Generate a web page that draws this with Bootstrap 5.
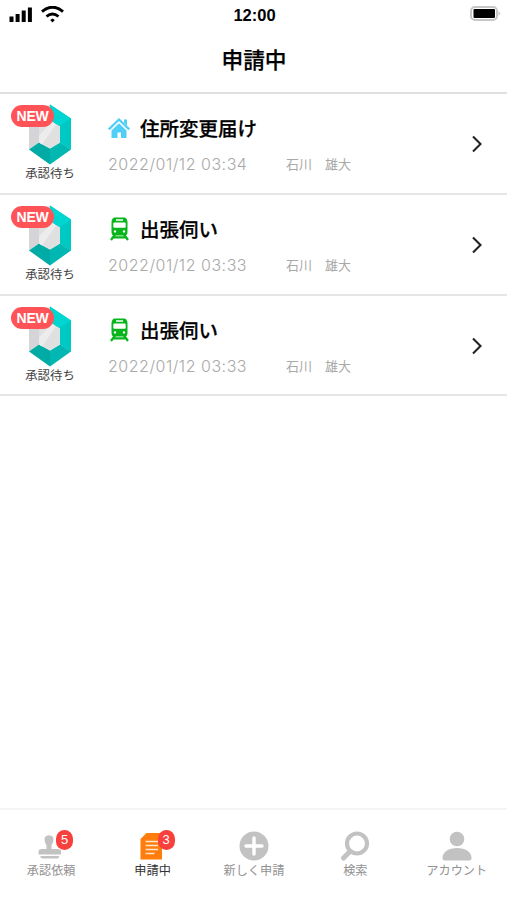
<!DOCTYPE html>
<html lang="ja">
<head>
<meta charset="utf-8">
<meta name="viewport" content="width=device-width, initial-scale=1">
<title>申請中</title>
<link rel="stylesheet" href="https://cdn.jsdelivr.net/npm/bootstrap@5.3.0/dist/css/bootstrap.min.css">
<style>
body{font-family:"Noto Sans CJK JP",sans-serif;background:#fff;color:#000;line-height:1}
svg{display:block;flex:none}
.screen{height:900px;overflow:hidden}
.status{height:30px;padding:0 6px 0 9px}
.battery{margin-top:-4px}
.clock{font:700 16.5px/30px "Liberation Sans",sans-serif;left:0;right:0;padding-left:2px}
.top-bar{height:94.4px;border-bottom:2px solid #e0e0e0}
.top-title{font-size:21.7px;font-weight:500;line-height:30px;margin:14px 0 0;padding-left:1px;-webkit-text-stroke:.25px #000}
.request{height:100.7px;border-bottom:2px solid #e6e6e6;color:#000;text-decoration:none}
.request:hover{color:#000}
.state{width:100px;padding-top:10px}
.state-text{font-size:12.4px;line-height:14px;color:#444;margin-top:1px}
.new-tag{left:11px;top:11px;width:43px;height:22px;font:700 14px/23px "Liberation Sans",sans-serif;background:#ff5358;color:#fff;letter-spacing:-.3px}
.info{padding:22px 0 0 8px}
.kind{height:24px}
.kind-icon{margin-right:10px}
.kind-name{font-size:19.5px;font-weight:500;line-height:24px;-webkit-text-stroke:.25px #000}
.meta{color:#a9a9a9;margin-top:14px;height:20px}
.when{font:300 16px/20px Inter,sans-serif;letter-spacing:.52px;width:178px;white-space:nowrap}
.who{font-size:13px;line-height:20px;white-space:pre}
.arrow{margin:1px 24px 0 0}
.tabs{height:92px;border-top:2px solid #f5f5f5;padding:21px 0 0}
.tab-item{color:#929292;font-size:12.2px;line-height:14px;white-space:nowrap;padding-left:1px}
.tab-item.active{color:#333}
.tab-icon{height:32px;width:34px}
.count{left:22px;top:-1px;width:17px;height:20px;font:400 13px/20px "Liberation Sans",sans-serif;color:#fff;background:#f8403c;border-radius:9px}
</style>
</head>
<body>
<svg width="0" height="0" class="position-absolute" aria-hidden="true">
<symbol id="gem" viewBox="0 0 44 60">
<path fill="#d5d5d7" d="M22 0 1 14v31l10-7V22l11-5z"/>
<path fill="#00d0ca" d="M22 0 43 14v31l-11-7V22l-10-5z"/>
<path fill="#00d6d1" d="M22 0 43 14l-11 7-10-5z"/>
<path fill="#00c9c4" d="m43 14v31l-11-7V21z"/>
<path fill="#00aaa5" d="m1 45 10-7 11 6v16z"/>
<path fill="#00b8b1" d="m43 45-11-7-10 6v16z"/>
<path fill="#e0e0e1" d="m22 16 10 6v16l-10 6-11-6V22z"/>
<path fill="#ececec" d="m28 20-14 20-3-2v-7l13-14z"/>
</symbol>
<symbol id="train" viewBox="0 0 22 24">
<path fill="#08b51c" fill-rule="evenodd" d="M6.500.5h10q3 .8 3 5V15q0 3.500-3 3.500h-10q-3 0-3-3.500V5.500q0-4.200 3-5zM8 2.300v1.400h7V2.300zM6.500 5.500q-1.200 0-1.200 1.200v3.100q0 1 1 1h10.400q1 0 1-1V6.700q0-1.200-1.200-1.200zM7 13.200a1.200 1.200 0 1 0 0 2.400 1.200 1.200 0 0 0 0-2.400zm9 0a1.200 1.200 0 1 0 0 2.400 1.200 1.200 0 0 0 0-2.400z"/>
<path fill="none" stroke="#08b51c" stroke-width="2.200" d="m7 17.500-4 5.500M16 17.500l4 5.500M5.500 20.300h12"/>
</symbol>
</svg>
<main class="screen d-flex flex-column">
<header class="top-bar">
<div class="status d-flex align-items-center justify-content-between position-relative">
<div class="d-flex align-items-center">
<svg width="24" height="17" viewBox="0 0 24 17"><path d="M.5 9.500h4V15h-4zM6.600 7h4v8h-4zM12.700 3.500h4V15h-4zM18.900.5h4V15h-4z"/></svg>
<svg class="ms-2" width="23" height="18" viewBox="0 0 23 18"><path fill="none" stroke="#000" stroke-width="2.900" d="M1 5.700Q11.500-3.300 22 5.700M5.500 10.500Q11.500 5.300 17.500 10.500"/><path d="m11.500 12.400 2.300 1.700-2.300 2.300-2.300-2.300z"/></svg>
</div>
<div class="clock position-absolute text-center">12:00</div>
<svg class="battery" width="31" height="16" viewBox="0 0 31 16"><rect x="1" y="2" width="26" height="13" rx="4" fill="#fff" stroke="#c6c6c6" stroke-width="2"/><rect x="3.500" y="4" width="21.500" height="9" rx="1"/><path fill="#c6c6c6" d="m28.500 6 2 2.500-2 2.500z"/></svg>
</div>
<h1 class="top-title text-center">申請中</h1>
</header>
<section class="flex-grow-1">
<a href="#" class="request d-flex position-relative">
<div class="state d-flex flex-column align-items-center"><svg width="44" height="61"><use href="#gem"/></svg><div class="state-text">承認待ち</div><span class="new-tag position-absolute rounded-pill text-center">NEW</span></div>
<div class="info flex-grow-1">
<div class="kind d-flex align-items-center"><svg class="kind-icon" width="22" height="22" viewBox="0 0 22 22"><path fill="none" stroke="#4fcff5" stroke-width="2.300" d="M.8 12.300 11 2.500l10.200 9.800"/><path fill="#4fcff5" d="M16 2.500h3v6l-3-3zM11 6.200l7.500 7.200V21H13v-5.500H9.500V21h-6v-7.600z"/></svg><span class="kind-name">住所変更届け</span></div>
<div class="meta d-flex"><span class="when">2022/01/12 03:34</span><span class="who">石川　雄大</span></div>
</div>
<svg class="arrow align-self-center" width="12" height="18" viewBox="0 0 12 18"><path fill="none" stroke="#222" stroke-width="2.100" d="m2 1.500 7.500 7.500L2 16.500"/></svg>
</a>
<a href="#" class="request d-flex position-relative">
<div class="state d-flex flex-column align-items-center"><svg width="44" height="61"><use href="#gem"/></svg><div class="state-text">承認待ち</div><span class="new-tag position-absolute rounded-pill text-center">NEW</span></div>
<div class="info flex-grow-1">
<div class="kind d-flex align-items-center"><svg class="kind-icon" width="22" height="24"><use href="#train"/></svg><span class="kind-name">出張伺い</span></div>
<div class="meta d-flex"><span class="when">2022/01/12 03:33</span><span class="who">石川　雄大</span></div>
</div>
<svg class="arrow align-self-center" width="12" height="18" viewBox="0 0 12 18"><path fill="none" stroke="#222" stroke-width="2.100" d="m2 1.500 7.500 7.500L2 16.500"/></svg>
</a>
<a href="#" class="request d-flex position-relative">
<div class="state d-flex flex-column align-items-center"><svg width="44" height="61"><use href="#gem"/></svg><div class="state-text">承認待ち</div><span class="new-tag position-absolute rounded-pill text-center">NEW</span></div>
<div class="info flex-grow-1">
<div class="kind d-flex align-items-center"><svg class="kind-icon" width="22" height="24"><use href="#train"/></svg><span class="kind-name">出張伺い</span></div>
<div class="meta d-flex"><span class="when">2022/01/12 03:33</span><span class="who">石川　雄大</span></div>
</div>
<svg class="arrow align-self-center" width="12" height="18" viewBox="0 0 12 18"><path fill="none" stroke="#222" stroke-width="2.100" d="m2 1.500 7.500 7.500L2 16.500"/></svg>
</a>
</section>
<nav class="tabs row g-0 row-cols-5">
<div class="tab-item col d-flex flex-column align-items-center"><div class="tab-icon position-relative"><svg width="34" height="34" viewBox="0 0 34 34"><path fill="#c2c2c2" d="M12.500 14.500q-3-5.500-1.500-8.500a5 4.500 0 0 1 8 0q1.500 3-1.500 8.500V18H24q3 0 3 3v2.500H4.500V21q0-3 3-3h5zM6.500 25H25v1.500l-1.500 1h-15l-2-1z"/></svg><span class="count position-absolute text-center">5</span></div><div class="tab-label">承認依頼</div></div>
<div class="tab-item active col d-flex flex-column align-items-center"><div class="tab-icon position-relative"><svg width="34" height="34" viewBox="0 0 34 34"><path fill="#ff7d0c" d="M10.500 2H26v26.500H4.500V8z"/><path fill="none" stroke="#ffe5cc" stroke-width="1.600" d="M9.500 10.500H22M9.500 14.500H22M9.500 18.500H22M9.500 22.500h9"/></svg><span class="count position-absolute text-center">3</span></div><div class="tab-label">申請中</div></div>
<div class="tab-item col d-flex flex-column align-items-center"><div class="tab-icon"><svg width="34" height="34" viewBox="0 0 34 34"><circle cx="17" cy="15" r="14.500" fill="#c2c2c2"/><path fill="none" stroke="#fff" stroke-width="3.400" stroke-linecap="round" d="M17 7v16M9 15h16"/></svg></div><div class="tab-label">新しく申請</div></div>
<div class="tab-item col d-flex flex-column align-items-center"><div class="tab-icon"><svg width="34" height="34" viewBox="0 0 34 34"><g fill="none" stroke="#c2c2c2"><circle cx="19" cy="12.500" r="10" stroke-width="4.200"/><path stroke-width="5" stroke-linecap="round" d="m11.500 21-6 6"/></g></svg></div><div class="tab-label">検索</div></div>
<div class="tab-item col d-flex flex-column align-items-center"><div class="tab-icon"><svg width="34" height="34" viewBox="0 0 34 34"><circle cx="17" cy="8" r="7.300" fill="#c2c2c2"/><path fill="#c2c2c2" d="M2.500 27c0-6 6-10 14.500-10s14.500 4 14.500 10q0 2.500-2.500 2.500H5q-2.500 0-2.500-2.500z"/></svg></div><div class="tab-label">アカウント</div></div>
</nav>
</main>
<script src="https://cdn.jsdelivr.net/npm/bootstrap@5.3.0/dist/js/bootstrap.bundle.min.js"></script>
</body>
</html>
